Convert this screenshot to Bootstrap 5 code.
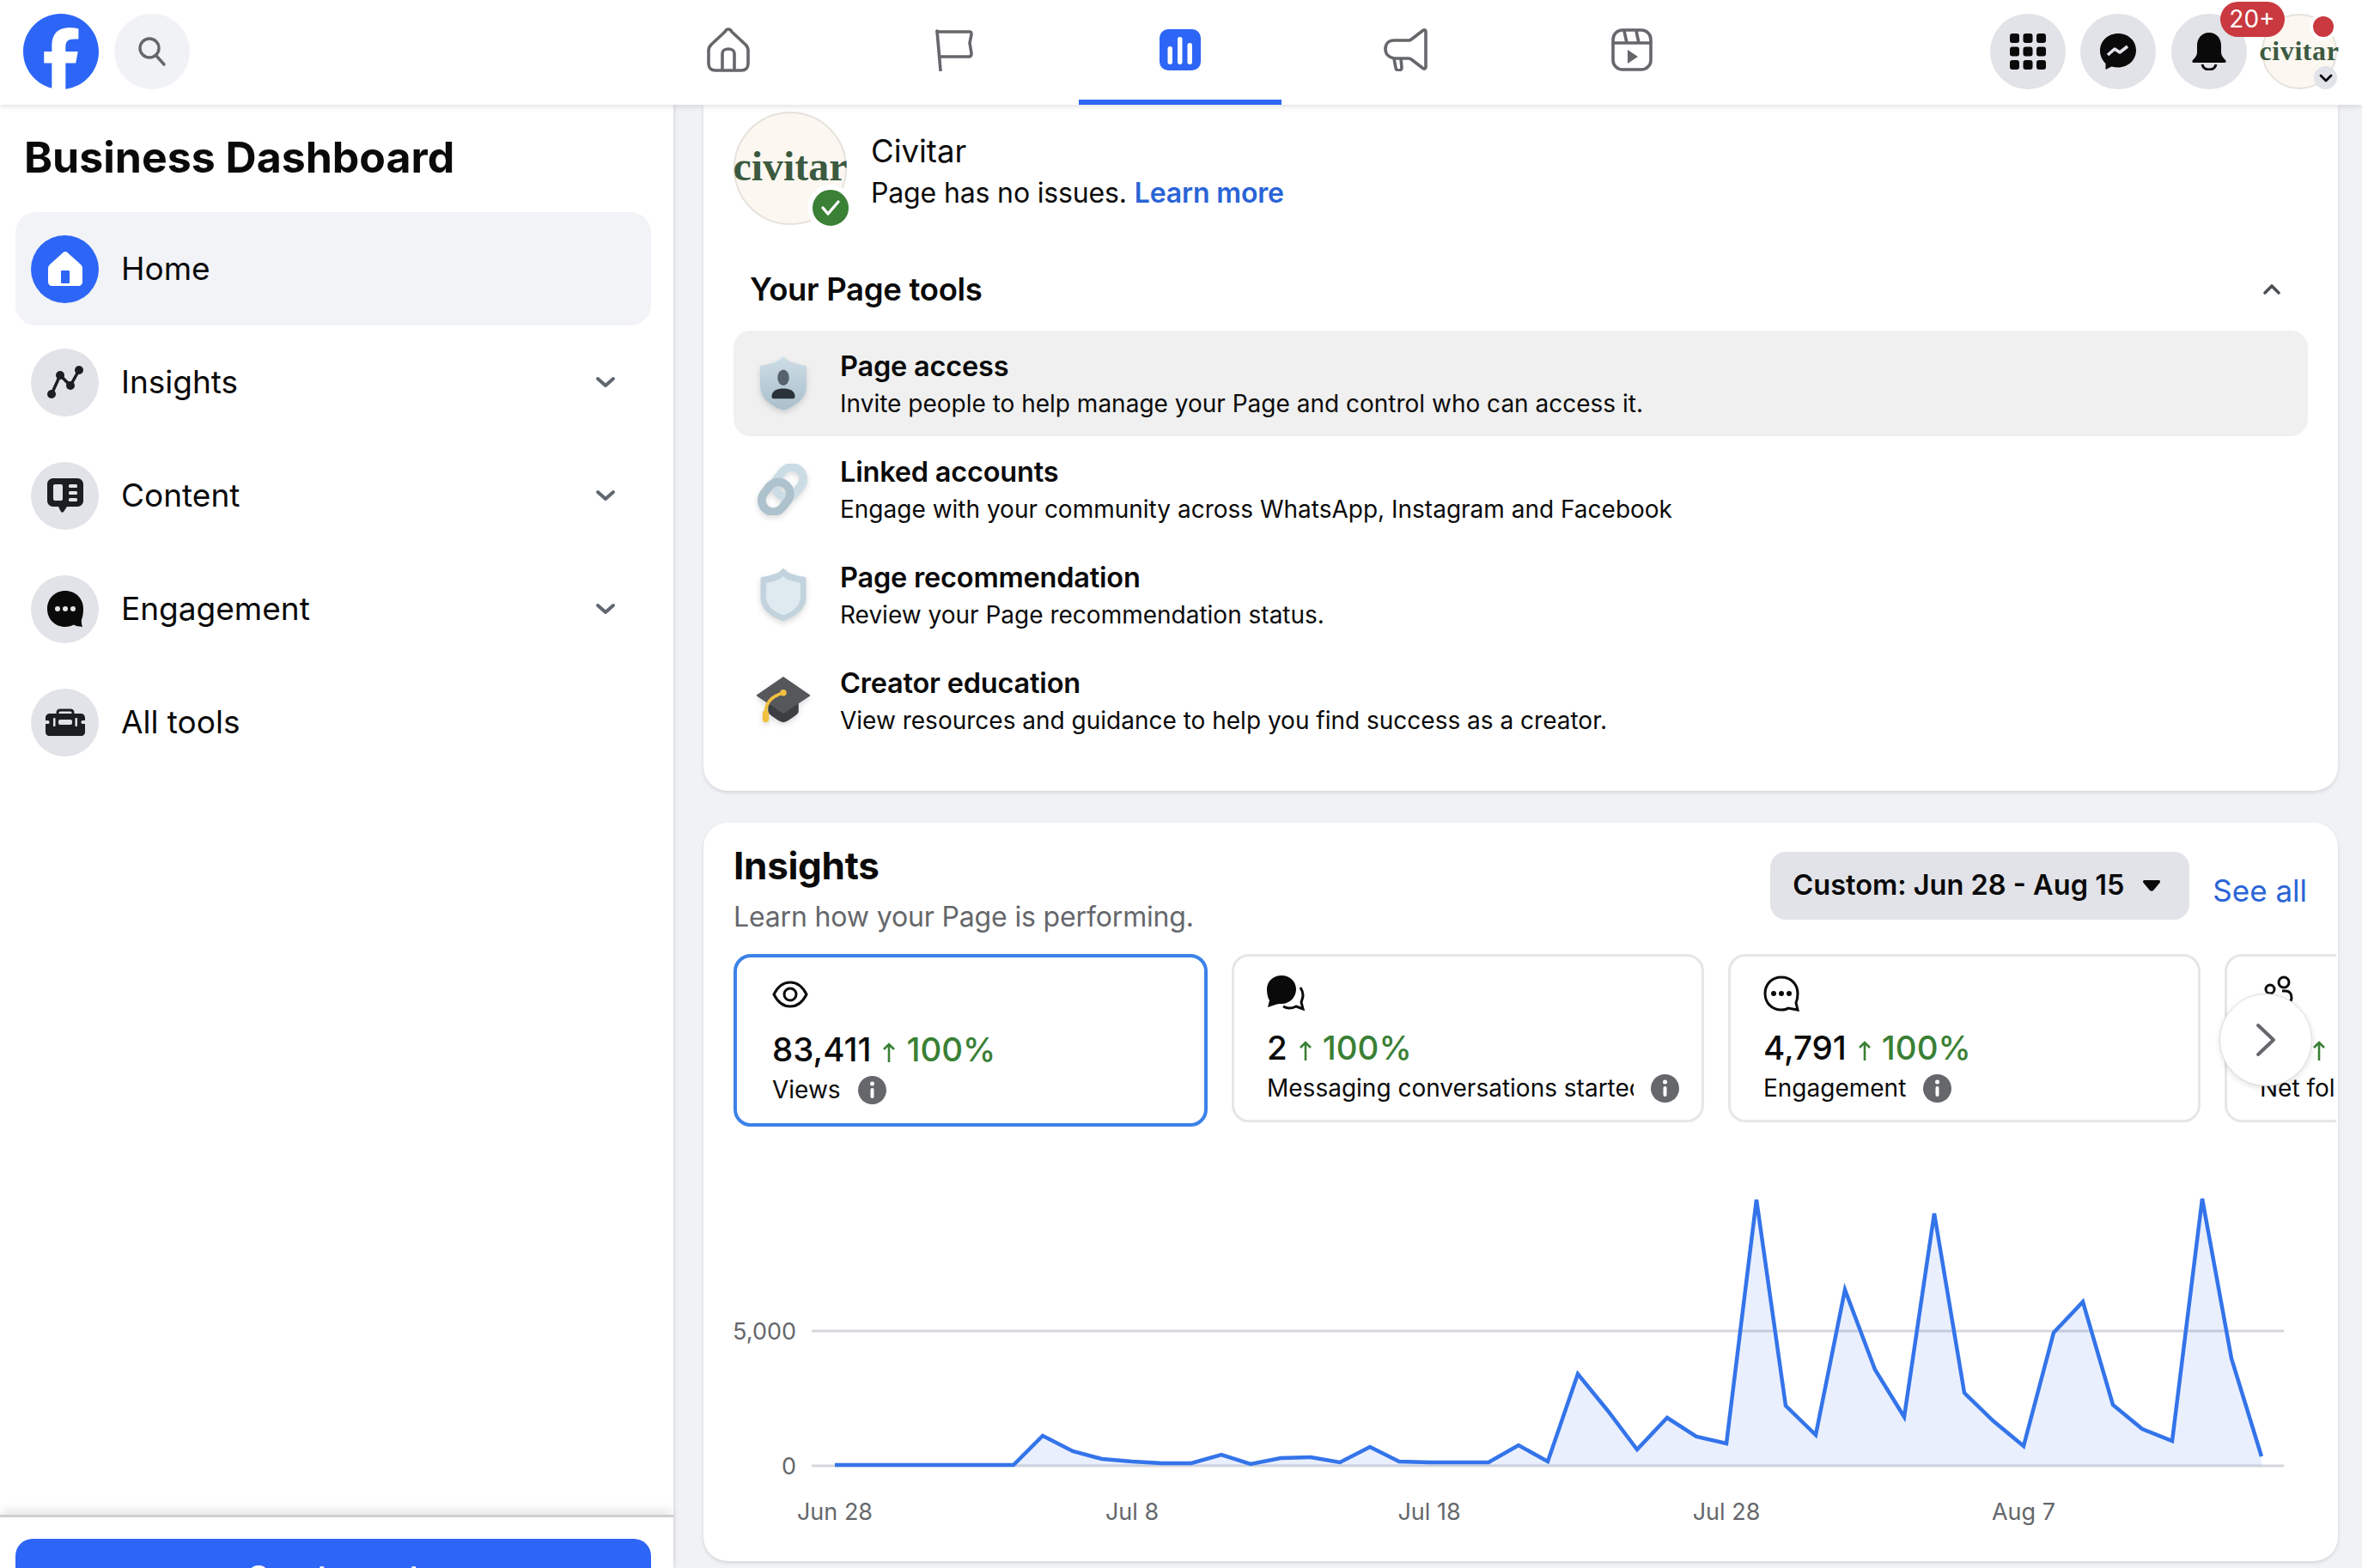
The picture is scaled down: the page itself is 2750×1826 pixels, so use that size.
<!DOCTYPE html>
<html lang="en">
<head>
    <meta charset="UTF-8">
    <title>Business Dashboard</title>
    <link rel="stylesheet" href="https://cdn.jsdelivr.net/npm/bootstrap@5.3.0/dist/css/bootstrap.min.css">
    <style>
        html, body {
            height: 100%;
        }
        body {
            overflow: hidden;
            font-family: Inter, "Liberation Sans", sans-serif;
            color: #0a0a0a;
            background: #f1f2f6;
        }
        .topbar {
            height: 122px;
            background: #fff;
            display: grid;
            grid-template-columns: 1fr auto 1fr;
            box-shadow: 0 2px 6px rgba(0, 0, 0, 0.12);
            position: relative;
            z-index: 5;
        }
        .top-left {
            padding: 16px 0 0 27px;
            gap: 18px;
        }
        .round-btn {
            width: 88px;
            height: 88px;
            border-radius: 50%;
            background: #e2e3e8;
            flex: none;
        }
        .round-btn.pale {
            background: #f1f2f6;
        }
        .top-tabs {
            gap: 27px;
            margin: 0 1px 0 -1px;
        }
        .top-tab {
            width: 236px;
            height: 122px;
            border-bottom: 6px solid transparent;
        }
        .top-tab.on {
            border-bottom-color: #2d66f6;
        }
        .top-right {
            padding: 16px 29px 0 0;
            gap: 17.5px;
        }
        .count-pill {
            position: absolute;
            top: -14px;
            left: 57px;
            width: 75px;
            height: 41px;
            border-radius: 21px;
            background: #c9393f;
            color: #fff;
            font-size: 28px;
            line-height: 41px;
            text-align: center;
            z-index: 2;
        }
        .logo-disc {
            border-radius: 50%;
            background: #fcf7f1;
            border: 2px solid #e6e2dc;
            color: #3b5a40;
            font-family: "Liberation Serif", serif;
            font-weight: 700;
            flex: none;
            white-space: nowrap;
        }
        .logo-sm {
            width: 88px;
            height: 88px;
            font-size: 32px;
            letter-spacing: 0.6px;
            padding-bottom: 2px;
        }
        .logo-lg {
            width: 132px;
            height: 132px;
            font-size: 48px;
            padding-bottom: 4px;
        }
        .red-dot {
            position: absolute;
            top: -1px;
            right: 0;
            width: 32px;
            height: 32px;
            border-radius: 50%;
            background: #c9393f;
            border: 4px solid #fff;
        }
        .down-chip {
            position: absolute;
            bottom: 0;
            right: 0;
            width: 27px;
            height: 27px;
            border-radius: 50%;
            background: #e2e3e8;
        }
        .page-body {
            height: 1704px;
        }
        .side {
            width: 784px;
            flex: none;
            background: #fff;
            box-shadow: 1px 0 4px rgba(0, 0, 0, 0.12);
            position: relative;
            z-index: 2;
        }
        .side-title {
            font-size: 50px;
            font-weight: 700;
            line-height: 60px;
            margin: 31px 0 34px 28px;
        }
        .side-list {
            padding: 0 26px 0 18px;
        }
        .side-item {
            height: 132px;
            padding: 0 18px;
            border-radius: 24px;
            font-size: 37px;
            gap: 26px;
        }
        .side-item.on {
            background: #f2f3f7;
        }
        .side-ic {
            width: 79px;
            height: 79px;
            border-radius: 50%;
            background: #e2e3e8;
            flex: none;
        }
        .side-ic.blue {
            background: #2d66f6;
        }
        .side-chev {
            margin-right: 23px;
        }
        .side-foot {
            height: 62px;
            border-top: 3px solid #cfcfcf;
            box-shadow: 0 -8px 10px -2px rgba(0, 0, 0, 0.09);
            padding: 25px 26px 0 18px;
            overflow: hidden;
            background: #fff;
        }
        .make-post {
            height: 88px;
            border-radius: 20px;
            background: #2d66f6;
            color: #fff;
            font-size: 36px;
            font-weight: 600;
            text-align: center;
            line-height: 88px;
        }
        .main-col {
            padding: 0 28px 0 35px;
            min-width: 0;
        }
        .panel {
            background: #fff;
            border-radius: 0 0 28px 28px;
            box-shadow: 0 2px 4px rgba(0, 0, 0, 0.12);
        }
        .page-panel {
            height: 799px;
            padding: 8px 35px 0;
            margin-bottom: 37px;
        }
        .page-head {
            gap: 28px;
        }
        .check-chip {
            position: absolute;
            right: -8px;
            bottom: -7px;
            width: 54px;
            height: 54px;
            border-radius: 50%;
            background: #3a8035;
            border: 6px solid #fff;
        }
        .page-name {
            font-size: 36.5px;
            line-height: 48px;
            margin-top: 8px;
        }
        .page-state {
            font-size: 32px;
            line-height: 46px;
            letter-spacing: -0.15px;
            margin-top: 2px;
        }
        a.blue-link {
            color: #2a64d6;
            text-decoration: none;
            font-weight: 600;
        }
        .tools-head {
            height: 46px;
            margin: 52px 0 25px;
            padding: 0 31px 0 19px;
            font-size: 36.5px;
            font-weight: 600;
            letter-spacing: -0.3px;
        }
        .tool-row {
            height: 123px;
            padding-left: 20px;
            gap: 29px;
            border-radius: 20px;
        }
        .tool-row.on {
            background: #f0f0f0;
        }
        .tool-ic {
            width: 75px;
            flex: none;
        }
        .tool-ic svg {
            filter: drop-shadow(0 3px 3px rgba(0, 0, 0, 0.14));
        }
        .tool-text {
            padding-top: 3px;
        }
        .tool-name {
            font-size: 32.5px;
            font-weight: 600;
            line-height: 43px;
            letter-spacing: -0.2px;
        }
        .tool-desc {
            font-size: 28px;
            line-height: 44px;
        }
        .insight-panel {
            height: 860px;
            border-radius: 28px;
            padding: 22px 36px 0 35px;
        }
        .insight-title {
            font-size: 44px;
            font-weight: 700;
            line-height: 56px;
            letter-spacing: -0.3px;
        }
        .insight-sub {
            font-size: 32px;
            line-height: 44px;
            letter-spacing: -0.15px;
            color: #65676b;
            margin-top: 10px;
        }
        .range-btn {
            width: 488px;
            height: 79px;
            padding-left: 26px;
            border-radius: 18px;
            background: #e2e3e8;
            font-size: 32.5px;
            font-weight: 600;
            gap: 22px;
            margin-top: 12px;
        }
        a.see-all {
            font-size: 35px;
            font-weight: 400;
            margin: 31px 0 0 27px;
        }
        .kpi-strip {
            margin: 21px -34px 0 0;
            gap: 28px;
            height: 205px;
            overflow: hidden;
            align-items: flex-start;
        }
        .kpi {
            width: 550px;
            height: 196px;
            flex: none;
            border: 3px solid #e6e6e6;
            border-radius: 20px;
            padding: 22px 38px 0;
            position: relative;
        }
        .kpi.on {
            width: 552px;
            height: 201px;
            border: 4px solid #3b82e8;
            padding: 27px 41px 0;
        }
        .kpi-ic {
            height: 50px;
        }
        .kpi-num {
            font-size: 38.5px;
            font-weight: 500;
            line-height: 50px;
            margin-top: 9px;
            white-space: nowrap;
        }
        .kpi.on .kpi-num {
            margin-top: 5px;
        }
        .kpi-arrow {
            margin: 0 12px 0 13px;
        }
        .kpi-up {
            color: #3a8035;
            font-weight: 500;
        }
        .kpi-lbl {
            font-size: 28px;
            line-height: 38px;
            gap: 20px;
            margin-top: 3px;
            white-space: nowrap;
        }
        .kpi-clip {
            width: 427px;
            overflow: hidden;
            flex: none;
        }
        .info-dot {
            width: 33px;
            height: 33px;
            flex: none;
        }
        .next-btn {
            position: absolute;
            left: 2584px;
            top: 1035px;
            width: 108px;
            height: 108px;
            border-radius: 50%;
            background: #fff;
            border: 1px solid #ddd;
            box-shadow: 0 2px 6px rgba(0, 0, 0, 0.12);
        }
        .chart-svg {
            display: block;
            margin: 0 -36px 0 -35px;
        }
        .chart-svg text {
            font-family: Inter, "Liberation Sans", sans-serif;
            font-size: 27px;
            fill: #65676b;
        }
    </style>
</head>
<body>

<header class="topbar">
    <div class="top-left d-flex">
        <svg width="88" height="88" viewBox="0 0 36 36">
            <path fill="#2d66f6" d="M20.181 35.87C29.094 34.791 36 27.202 36 18c0-9.941-8.059-18-18-18S0 8.059 0 18c0 8.442 5.811 15.526 13.652 17.471L14 34h5.5l.681 1.87Z"/>
            <path fill="#fff" d="M13.651 35.471v-11.97H9.936V18h3.715v-2.37c0-6.127 2.772-8.964 8.784-8.964 1.138 0 3.103.223 3.91.446v4.983c-.425-.043-1.167-.065-2.081-.065-2.952 0-4.09 1.116-4.09 4.025V18h5.883l-1.008 5.5h-4.867v12.37a18.183 18.183 0 0 1-6.53-.399Z"/>
        </svg>
        <div class="round-btn pale d-flex align-items-center justify-content-center">
            <svg width="36" height="36" viewBox="0 0 36 36" fill="none" stroke="#65676b" stroke-width="3.4" stroke-linecap="round"><circle cx="15" cy="14" r="11"/><path d="M23 23l9 10"/></svg>
        </div>
    </div>

    <nav class="top-tabs d-flex">
        <div class="top-tab d-flex align-items-center justify-content-center">
            <svg width="50" height="52" viewBox="0 0 50 52" fill="none" stroke="#65676b" stroke-width="3.6" stroke-linejoin="round"><path d="M25 2c-2 0-3 1-4 3L5 20c-2 2-3 4-3 7v15c0 5 3 8 8 8h30c5 0 8-3 8-8V27c0-3-1-5-3-7L29 5c-1-2-2-3-4-3Z"/><path d="M18 50V30c0-3 3-5 7-5s7 2 7 5v20"/></svg>
        </div>
        <div class="top-tab d-flex align-items-center justify-content-center">
            <svg width="44" height="50" viewBox="0 0 44 50" fill="none" stroke="#65676b" stroke-width="3.6" stroke-linejoin="round" stroke-linecap="round"><path d="M2 3l4 46"/><path d="M2 4h38c2 0 2 1 2 3l-2 10 2 12c0 3-1 4-3 4H5"/></svg>
        </div>
        <div class="top-tab on d-flex align-items-center justify-content-center">
            <svg width="48" height="48" viewBox="0 0 48 48"><rect width="48" height="48" rx="10" fill="#2d66f6"/><g fill="#fff"><rect x="9.5" y="20" width="5.5" height="21" rx="2.7"/><rect x="21" y="9" width="5.5" height="32" rx="2.7"/><rect x="32.5" y="16" width="5.5" height="25" rx="2.7"/></g></svg>
        </div>
        <div class="top-tab d-flex align-items-center justify-content-center">
            <svg width="52" height="50" viewBox="0 0 52 50" fill="none" stroke="#65676b" stroke-width="3.6" stroke-linejoin="round"><path d="M49 4c0-2-2-3-4-1L32 13c-1 1-2 1-3 1H12C6 14 2 18 2 24s4 10 10 11h17c1 0 2 0 3 1l13 10c2 2 4 1 4-1V4Z"/><path d="M12 35l2 11c0 2 2 3 4 3s3-2 3-3l-1-11"/></svg>
        </div>
        <div class="top-tab d-flex align-items-center justify-content-center">
            <svg width="48" height="50" viewBox="0 0 48 50" fill="none" stroke="#65676b" stroke-width="3.6" stroke-linejoin="round"><rect x="2" y="2" width="44" height="46" rx="11"/><path d="M2 17h44M15 3l3 14M29 3l3 14"/><path d="M19 25l12 8-12 8Z" fill="#65676b" stroke="none"/></svg>
        </div>
    </nav>

    <div class="top-right d-flex justify-content-end align-items-start">
        <div class="round-btn d-flex align-items-center justify-content-center">
            <svg width="42" height="42" viewBox="0 0 42 42" fill="#0a0a0a"><rect width="11" height="11" rx="3"/><rect x="15.5" width="11" height="11" rx="3"/><rect x="31" width="11" height="11" rx="3"/><rect y="15.5" width="11" height="11" rx="3"/><rect x="15.5" y="15.5" width="11" height="11" rx="3"/><rect x="31" y="15.5" width="11" height="11" rx="3"/><rect y="31" width="11" height="11" rx="3"/><rect x="15.5" y="31" width="11" height="11" rx="3"/><rect x="31" y="31" width="11" height="11" rx="3"/></svg>
        </div>
        <div class="round-btn d-flex align-items-center justify-content-center">
            <svg width="44" height="44" viewBox="0 0 44 44"><path fill="#0a0a0a" d="M22 1C10 1 1 10 1 21c0 6 2.500 11 6.500 15v7l7-3.500c2.300.7 4.800 1 7.500 1 12 0 21-9 21-20S34 1 22 1Z"/><path fill="none" stroke="#e2e3e8" stroke-width="3.600" stroke-linejoin="round" d="M10 26l8-7 6 4 9-7"/></svg>
        </div>
        <div class="round-btn position-relative d-flex align-items-center justify-content-center">
            <svg width="40" height="44" viewBox="0 0 40 44"><path fill="#0a0a0a" d="M20 0C11 0 6 7 6 15v8c0 3-2 6-5 9-1 1-1 3 1 3h36c2 0 2-2 1-3-3-3-5-6-5-9v-8C34 7 29 0 20 0Z"/><path fill="none" stroke="#0a0a0a" stroke-width="3" d="M12 37c1 4 4 6 8 6s7-2 8-6"/></svg>
            <span class="count-pill">20+</span>
        </div>
        <div class="position-relative">
            <div class="logo-disc logo-sm d-flex align-items-center justify-content-center">civitar</div>
            <span class="red-dot"></span>
            <span class="down-chip d-flex align-items-center justify-content-center">
                <svg width="16" height="10" viewBox="0 0 16 10" fill="none" stroke="#0a0a0a" stroke-width="2.800" stroke-linecap="round" stroke-linejoin="round"><path d="M2 2l6 6 6-6"/></svg>
            </span>
        </div>
    </div>
</header>

<div class="page-body d-flex position-relative">
    <aside class="side d-flex flex-column">
        <h1 class="side-title">Business Dashboard</h1>
        <div class="side-list flex-grow-1">
            <div class="side-item on d-flex align-items-center">
                <span class="side-ic blue d-flex align-items-center justify-content-center">
                    <svg width="42" height="42" viewBox="0 0 42 42"><path fill="#fff" d="M21 1c-1.500 0-2.500.8-3.500 2L3 16c-1.500 1.500-2 3-2 5v15c0 3 2 5 5 5h30c3 0 5-2 5-5V21c0-2-.5-3.500-2-5L24.500 3C23.500 1.800 22.500 1 21 1Z"/><rect x="16" y="23" width="10" height="15" rx="1" fill="#2d66f6"/></svg>
                </span>
                Home
            </div>
            <div class="side-item d-flex align-items-center">
                <span class="side-ic d-flex align-items-center justify-content-center">
                    <svg width="42" height="38" viewBox="0 0 42 38" fill="#1c1e21"><path fill="none" stroke="#1c1e21" stroke-width="3.500" d="M5 33l10-22 12 12L37 5"/><circle cx="5" cy="33" r="5"/><circle cx="15" cy="11" r="5"/><circle cx="27" cy="23" r="5"/><circle cx="37" cy="5" r="5"/></svg>
                </span>
                <span class="flex-grow-1">Insights</span>
                <svg class="side-chev" width="24" height="14" viewBox="0 0 24 14" fill="none" stroke="#606770" stroke-width="4" stroke-linecap="round" stroke-linejoin="round"><path d="M3 3l9 8 9-8"/></svg>
            </div>
            <div class="side-item d-flex align-items-center">
                <span class="side-ic d-flex align-items-center justify-content-center">
                    <svg width="42" height="40" viewBox="0 0 42 40"><path fill="#1c1e21" d="M7 0h28c4 0 7 3 7 7v19c0 4-3 7-7 7H23l-4 6c-1 1-2 1-3 0l-3-6H7c-4 0-7-3-7-7V7c0-4 3-7 7-7Z"/><rect x="7" y="7" width="11" height="19" rx="2" fill="#e2e3e8"/><rect x="25" y="7" width="10" height="4" rx="1.500" fill="#e2e3e8"/><rect x="25" y="15" width="10" height="4" rx="1.500" fill="#e2e3e8"/><rect x="25" y="23" width="10" height="4" rx="1.500" fill="#e2e3e8"/></svg>
                </span>
                <span class="flex-grow-1">Content</span>
                <svg class="side-chev" width="24" height="14" viewBox="0 0 24 14" fill="none" stroke="#606770" stroke-width="4" stroke-linecap="round" stroke-linejoin="round"><path d="M3 3l9 8 9-8"/></svg>
            </div>
            <div class="side-item d-flex align-items-center">
                <span class="side-ic d-flex align-items-center justify-content-center">
                    <svg width="42" height="42" viewBox="0 0 42 42"><path fill="#0a0a0a" d="M21 0C9 0 0 9 0 21s9 21 21 21c4 0 7-1 10-2.500 2 1.500 6 2 10 2.500-1-3-1.500-6-1-8.500 1.500-3.500 2-8 2-13C42 9 33 0 21 0Z"/><g fill="#e2e3e8"><circle cx="12" cy="21" r="3"/><circle cx="21" cy="21" r="3"/><circle cx="30" cy="21" r="3"/></g></svg>
                </span>
                <span class="flex-grow-1">Engagement</span>
                <svg class="side-chev" width="24" height="14" viewBox="0 0 24 14" fill="none" stroke="#606770" stroke-width="4" stroke-linecap="round" stroke-linejoin="round"><path d="M3 3l9 8 9-8"/></svg>
            </div>
            <div class="side-item d-flex align-items-center">
                <span class="side-ic d-flex align-items-center justify-content-center">
                    <svg width="46" height="32" viewBox="0 0 46 32"><path fill="none" stroke="#1c1e21" stroke-width="3" d="M14 7V5c0-2 1-3 3-3h12c2 0 3 1 3 3v2"/><path fill="#1c1e21" d="M5 6h36c3 0 5 2 5 5v3h-3c-1 0-1.500 1-1.500 2s.5 2 1.500 2h3v10c0 2-2 4-4 4H4c-2 0-4-2-4-4V18h3c1 0 1.500-1 1.500-2S4 14 3 14H0v-3c0-3 2-5 5-5Z"/><rect x="15" y="13" width="16" height="6" rx="2" fill="#e2e3e8"/><rect x="9" y="11" width="2.500" height="10" rx="1" fill="#e2e3e8"/><rect x="34.500" y="11" width="2.500" height="10" rx="1" fill="#e2e3e8"/></svg>
                </span>
                All tools
            </div>
        </div>
        <div class="side-foot"><div class="make-post">Create post</div></div>
    </aside>

    <main class="main-col flex-grow-1">
        <section class="panel page-panel">
            <div class="page-head d-flex align-items-center">
                <div class="position-relative">
                    <div class="logo-disc logo-lg d-flex align-items-center justify-content-center">civitar</div>
                    <span class="check-chip d-flex align-items-center justify-content-center">
                        <svg width="24" height="20" viewBox="0 0 24 20" fill="none" stroke="#fff" stroke-width="3.400" stroke-linecap="round" stroke-linejoin="round"><path d="M3 10l6 7L21 3"/></svg>
                    </span>
                </div>
                <div>
                    <div class="page-name">Civitar</div>
                    <div class="page-state">Page has no issues. <a class="blue-link" href="#">Learn more</a></div>
                </div>
            </div>

            <div class="tools-head d-flex justify-content-between align-items-center">
                Your Page tools
                <svg width="22" height="14" viewBox="0 0 22 14" fill="none" stroke="#4b4f56" stroke-width="3.600" stroke-linecap="round" stroke-linejoin="round"><path d="M3 11l8-8 8 8"/></svg>
            </div>

            <div class="tool-row on d-flex align-items-center">
                <span class="tool-ic d-flex justify-content-center">
                    <svg width="54" height="65" viewBox="0 0 64 76">
                        <defs><linearGradient id="shieldFill" x1="0" y1="0" x2="0" y2="1"><stop offset="0" stop-color="#cddde6"/><stop offset="1" stop-color="#a9bfcb"/></linearGradient></defs>
                        <path fill="url(#shieldFill)" d="M32 1l7 6c7 3 14 5 22 6 2 0 3 1 3 3v26c0 15-12 26-32 33C12 68 0 57 0 42V16c0-2 1-3 3-3 8-1 15-3 22-6Z"/>
                        <ellipse cx="32" cy="30" rx="8" ry="11" fill="#56636c"/><path fill="#2a3138" d="M16 56c0-8 7-11 16-11s16 3 16 11c0 2-1 3-3 3H19c-2 0-3-1-3-3Z"/>
                    </svg>
                </span>
                <div class="tool-text">
                    <div class="tool-name">Page access</div>
                    <div class="tool-desc">Invite people to help manage your Page and control who can access it.</div>
                </div>
            </div>
            <div class="tool-row d-flex align-items-center">
                <span class="tool-ic d-flex justify-content-center">
                    <svg width="60" height="60" viewBox="0 0 62 62" fill="none" stroke-width="10"><rect x="24" y="3" width="28" height="38" rx="14" transform="rotate(38 38 22)" stroke="#ccdce5"/><rect x="8" y="21" width="28" height="38" rx="14" transform="rotate(38 22 40)" stroke="#aec2cd"/></svg>
                </span>
                <div class="tool-text">
                    <div class="tool-name">Linked accounts</div>
                    <div class="tool-desc">Engage with your community across WhatsApp, Instagram and Facebook</div>
                </div>
            </div>
            <div class="tool-row d-flex align-items-center">
                <span class="tool-ic d-flex justify-content-center">
                    <svg width="54" height="63" viewBox="0 0 64 76">
                        <path fill="#c2d3dd" d="M32 1l7 6c7 3 14 5 22 6 2 0 3 1 3 3v26c0 15-12 26-32 33C12 68 0 57 0 42V16c0-2 1-3 3-3 8-1 15-3 22-6Z"/>
                        <path fill="#dfeaf0" d="M32 12l5 4c6 3 11 4 17 5 1 0 2 1 2 2v19c0 11-9 19-24 25C17 61 8 53 8 42V23c0-1 1-2 2-2 6-1 11-2 17-5Z"/>
                    </svg>
                </span>
                <div class="tool-text">
                    <div class="tool-name">Page recommendation</div>
                    <div class="tool-desc">Review your Page recommendation status.</div>
                </div>
            </div>
            <div class="tool-row d-flex align-items-center">
                <span class="tool-ic d-flex justify-content-center">
                    <svg width="68" height="56" viewBox="0 0 70 60"><path fill="#3c3e42" d="M16 24h38v20c0 3-15 13-19 13S16 47 16 44Z"/><path fill="#55575b" d="M35 0l32 22c2 1 2 2 0 3L35 46 3 25c-2-1-2-2 0-3Z"/><path fill="none" stroke="#f0c040" stroke-width="4" stroke-linecap="round" d="M35 20C22 24 15 30 13 42"/><circle cx="35" cy="20" r="4" fill="#f0c040"/><rect x="9" y="42" width="8" height="15" rx="4" fill="#f0c040"/></svg>
                </span>
                <div class="tool-text">
                    <div class="tool-name">Creator education</div>
                    <div class="tool-desc">View resources and guidance to help you find success as a creator.</div>
                </div>
            </div>
        </section>

        <section class="panel insight-panel">
            <div class="d-flex">
                <div class="flex-grow-1">
                    <div class="insight-title">Insights</div>
                    <div class="insight-sub">Learn how your Page is performing.</div>
                </div>
                <div class="range-btn d-flex align-items-center">
                    Custom: Jun 28 - Aug 15
                    <svg width="20" height="13" viewBox="0 0 20 13"><path fill="#0a0a0a" d="M2 0h16c2 0 2.500 1.500 1.500 3l-7.500 9c-1 1-3 1-4 0L.5 3C-.5 1.500 0 0 2 0Z"/></svg>
                </div>
                <a class="blue-link see-all" href="#">See all</a>
            </div>

            <div class="kpi-strip d-flex">
                <div class="kpi on">
                    <div class="kpi-ic">
                        <svg width="42" height="32" viewBox="0 0 42 32" fill="none" stroke="#0a0a0a" stroke-width="3"><path d="M2 16C7 6 14 2 21 2s14 4 19 14c-5 10-12 14-19 14S7 26 2 16Z"/><circle cx="21" cy="16" r="7"/></svg>
                    </div>
                    <div class="kpi-num">83,411<svg class="kpi-arrow" width="16" height="24" viewBox="0 0 16 24" fill="none" stroke="#3a8035" stroke-width="2.600"><path d="M8 24V3M2 9l6-6 6 6"/></svg><span class="kpi-up">100%</span></div>
                    <div class="kpi-lbl d-flex align-items-center">Views
                        <svg class="info-dot" viewBox="0 0 33 33"><circle cx="16.500" cy="16.500" r="16.500" fill="#65676b"/><circle cx="16.500" cy="9" r="2.500" fill="#fff"/><rect x="14.500" y="14" width="4" height="12" rx="2" fill="#fff"/></svg>
                    </div>
                </div>
                <div class="kpi">
                    <div class="kpi-ic">
                        <svg width="44" height="42" viewBox="0 0 44 42"><path fill="#0a0a0a" d="M17 0c10 0 17 7 17 16s-7 17-17 17c-3 0-5 0-7 1l-9 3 2-8C1 26 0 21 0 16 0 7 7 0 17 0Z"/><path fill="none" stroke="#0a0a0a" stroke-width="3" d="M39 14c2 3 3 6 3 9s-1 5-2 8l2 8-8-3c-4 2-10 3-15 0"/></svg>
                    </div>
                    <div class="kpi-num">2<svg class="kpi-arrow" width="16" height="24" viewBox="0 0 16 24" fill="none" stroke="#3a8035" stroke-width="2.600"><path d="M8 24V3M2 9l6-6 6 6"/></svg><span class="kpi-up">100%</span></div>
                    <div class="kpi-lbl d-flex align-items-center"><span class="kpi-clip">Messaging conversations started</span>
                        <svg class="info-dot" viewBox="0 0 33 33"><circle cx="16.500" cy="16.500" r="16.500" fill="#65676b"/><circle cx="16.500" cy="9" r="2.500" fill="#fff"/><rect x="14.500" y="14" width="4" height="12" rx="2" fill="#fff"/></svg>
                    </div>
                </div>
                <div class="kpi">
                    <div class="kpi-ic">
                        <svg width="42" height="42" viewBox="0 0 42 42" fill="none" stroke="#0a0a0a" stroke-width="3"><path d="M21 2C10 2 2 10 2 21s8 19 19 19c3 0 6-.5 8-2l11 2-2-8c1.500-3.500 2-7 2-11C40 10 32 2 21 2Z"/><g fill="#0a0a0a" stroke="none"><circle cx="12" cy="21" r="3"/><circle cx="21" cy="21" r="3"/><circle cx="30" cy="21" r="3"/></g></svg>
                    </div>
                    <div class="kpi-num">4,791<svg class="kpi-arrow" width="16" height="24" viewBox="0 0 16 24" fill="none" stroke="#3a8035" stroke-width="2.600"><path d="M8 24V3M2 9l6-6 6 6"/></svg><span class="kpi-up">100%</span></div>
                    <div class="kpi-lbl d-flex align-items-center">Engagement
                        <svg class="info-dot" viewBox="0 0 33 33"><circle cx="16.500" cy="16.500" r="16.500" fill="#65676b"/><circle cx="16.500" cy="9" r="2.500" fill="#fff"/><rect x="14.500" y="14" width="4" height="12" rx="2" fill="#fff"/></svg>
                    </div>
                </div>
                <div class="kpi">
                    <div class="kpi-ic">
                        <svg width="40" height="36" viewBox="0 0 40 36" fill="none" stroke="#0a0a0a" stroke-width="3"><circle cx="12" cy="16" r="5"/><circle cx="28" cy="8" r="6"/><path d="M26 18h4c5 0 7 4 7 8s-2 6-7 6"/></svg>
                    </div>
                    <div class="kpi-num">85<svg class="kpi-arrow" width="16" height="24" viewBox="0 0 16 24" fill="none" stroke="#3a8035" stroke-width="2.600"><path d="M8 24V3M2 9l6-6 6 6"/></svg><span class="kpi-up">100%</span></div>
                    <div class="kpi-lbl">Net follows</div>
                </div>
            </div>

            <svg class="chart-svg" width="1903" height="510" viewBox="819 1316 1903 510">
                <line x1="945" y1="1550" x2="2659" y2="1550" stroke="#d6d7dc" stroke-width="3"/>
                <line x1="945" y1="1707" x2="2659" y2="1707" stroke="#d6d7dc" stroke-width="3"/>
                <polygon fill="#2d66f6" fill-opacity="0.1" points="972,1707 972,1706 1007,1706 1041,1706 1076,1706 1110,1706 1145,1706 1180,1706 1214,1672 1249,1690 1283,1699 1318,1702 1353,1704 1387,1704 1422,1694 1456,1705 1491,1698 1526,1697 1560,1703 1595,1685 1629,1702 1664,1703 1699,1703 1733,1703 1768,1683 1802,1702 1837,1600 1872,1643 1906,1688 1941,1651 1975,1673 2010,1681 2045,1397 2079,1637 2114,1671 2148,1502 2183,1595 2217,1650 2252,1413 2287,1622 2321,1655 2356,1684 2391,1552 2425,1516 2460,1636 2494,1664 2529,1678 2564,1396 2598,1582 2633,1696 2633,1707"/>
                <polyline fill="none" stroke="#3474ea" stroke-width="4.5" points="972,1706 1007,1706 1041,1706 1076,1706 1110,1706 1145,1706 1180,1706 1214,1672 1249,1690 1283,1699 1318,1702 1353,1704 1387,1704 1422,1694 1456,1705 1491,1698 1526,1697 1560,1703 1595,1685 1629,1702 1664,1703 1699,1703 1733,1703 1768,1683 1802,1702 1837,1600 1872,1643 1906,1688 1941,1651 1975,1673 2010,1681 2045,1397 2079,1637 2114,1671 2148,1502 2183,1595 2217,1650 2252,1413 2287,1622 2321,1655 2356,1684 2391,1552 2425,1516 2460,1636 2494,1664 2529,1678 2564,1396 2598,1582 2633,1696"/>
                <text x="927" y="1560" text-anchor="end">5,000</text>
                <text x="927" y="1717" text-anchor="end">0</text>
                <text x="972" y="1770" text-anchor="middle">Jun 28</text>
                <text x="1318" y="1770" text-anchor="middle">Jul 8</text>
                <text x="1664" y="1770" text-anchor="middle">Jul 18</text>
                <text x="2010" y="1770" text-anchor="middle">Jul 28</text>
                <text x="2356" y="1770" text-anchor="middle">Aug 7</text>
            </svg>
        </section>

        <button class="next-btn d-flex align-items-center justify-content-center" type="button">
            <svg width="24" height="40" viewBox="0 0 24 40" fill="none" stroke="#65676b" stroke-width="4" stroke-linecap="round" stroke-linejoin="round"><path d="M3 3l18 17L3 37"/></svg>
        </button>
    </main>
</div>

</body>
</html>
